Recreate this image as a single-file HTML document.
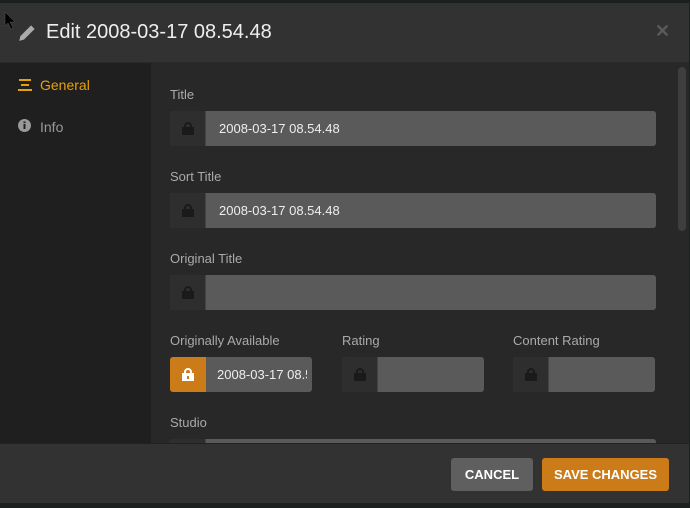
<!DOCTYPE html>
<html><head><style>
*{box-sizing:border-box;margin:0;padding:0}
body{width:690px;height:508px;background:#1c211f;font-family:"Liberation Sans",sans-serif;position:relative;overflow:hidden}
.dlg{position:absolute;left:0;top:3px;width:689px;height:500px;background:#282828}
.hdr{position:absolute;left:0;top:0;width:689px;height:60px;background:#323232;border-bottom:1px solid #2a2a2a}
.hdr h1{position:absolute;left:46px;top:18px;font-size:20px;font-weight:normal;color:#eee}
.side{position:absolute;left:0;top:60px;width:151px;height:380px;background:#1f1f1f}
.nav{position:absolute;left:40px;font-size:14px}
.lbl{position:absolute;left:170px;font-size:13px;color:#aaa}
.inp{position:absolute;height:35px;background:#5a5a5a;border-radius:3px;overflow:hidden}
.lk{position:absolute;left:0;top:0;width:36px;height:35px;background:#2e2e2e;border-right:1px solid #444}
.lk svg{position:absolute;left:12px;top:11px}
.val{position:absolute;left:49px;top:10px;font-size:13px;color:#eee;white-space:nowrap}
.ftr{position:absolute;left:0;top:440px;width:689px;height:60px;background:#323232;border-top:1px solid #222}
.btn{position:absolute;top:14px;height:33px;border-radius:3px;color:#fff;font-weight:bold;font-size:13px;text-align:center;line-height:33px}
</style></head><body>
<div class="dlg">
<div class="hdr">
<svg style="position:absolute;left:18px;top:20px" width="19" height="19" viewBox="0 0 16 16"><path d="M1 15 L2 11 L11 2 L14 5 L5 14 Z" fill="#aaa"/></svg>
<h1>Edit 2008-03-17 08.54.48</h1>
<div style="position:absolute;left:655px;top:18px;color:#5a5a5a;font-size:18px;font-weight:bold">✕</div>
</div>
<div class="side">
<svg style="position:absolute;left:18px;top:16px" width="14" height="12"><rect x="1" y="0" width="12" height="2" fill="#e5a00d"/><rect x="3" y="5" width="8" height="2" fill="#e5a00d"/><rect x="0" y="10" width="14" height="2" fill="#e5a00d"/></svg>
<div class="nav" style="top:14px;color:#e5a00d">General</div>
<svg style="position:absolute;left:18px;top:56px" width="13" height="13"><circle cx="6.5" cy="6.5" r="6.5" fill="#999"/><rect x="5.5" y="5" width="2" height="5" fill="#1f1f1f"/><rect x="5.5" y="2.5" width="2" height="1.6" fill="#1f1f1f"/></svg>
<div class="nav" style="top:56px;color:#999">Info</div>
</div>
<div style="position:absolute;left:678px;top:64px;width:8px;height:164px;background:#3e3e3e;border-radius:4px"></div>

<div class="lbl" style="top:84px">Title</div>
<div class="inp" style="left:170px;top:108px;width:486px"><div class="lk"><svg width="12" height="13"><rect x="0" y="5" width="12" height="8" fill="#1a1a1a"/><path d="M3 6V4a3 3 0 0 1 6 0v2" stroke="#1a1a1a" stroke-width="2" fill="none"/></svg></div><div class="val">2008-03-17 08.54.48</div></div>
<div class="lbl" style="top:166px">Sort Title</div>
<div class="inp" style="left:170px;top:190px;width:486px"><div class="lk"><svg width="12" height="13"><rect x="0" y="5" width="12" height="8" fill="#1a1a1a"/><path d="M3 6V4a3 3 0 0 1 6 0v2" stroke="#1a1a1a" stroke-width="2" fill="none"/></svg></div><div class="val">2008-03-17 08.54.48</div></div>
<div class="lbl" style="top:248px">Original Title</div>
<div class="inp" style="left:170px;top:272px;width:486px"><div class="lk"><svg width="12" height="13"><rect x="0" y="5" width="12" height="8" fill="#1a1a1a"/><path d="M3 6V4a3 3 0 0 1 6 0v2" stroke="#1a1a1a" stroke-width="2" fill="none"/></svg></div></div>
<div class="lbl" style="top:330px">Originally Available</div>
<div class="lbl" style="top:330px;left:342px">Rating</div>
<div class="lbl" style="top:330px;left:513px">Content Rating</div>
<div class="inp" style="left:170px;top:354px;width:142px"><div class="lk" style="background:#cc7b19;border:none"><svg width="12" height="13"><rect x="0" y="5" width="12" height="8" fill="#fff"/><path d="M3 6V4a3 3 0 0 1 6 0v2" stroke="#fff" stroke-width="2" fill="none"/><rect x="5" y="8" width="2" height="3" fill="#cc7b19"/></svg></div><div class="val" style="left:47px;width:90px;overflow:hidden">2008-03-17 08.54.48</div></div>
<div class="inp" style="left:342px;top:354px;width:142px"><div class="lk"><svg width="12" height="13"><rect x="0" y="5" width="12" height="8" fill="#1a1a1a"/><path d="M3 6V4a3 3 0 0 1 6 0v2" stroke="#1a1a1a" stroke-width="2" fill="none"/></svg></div></div>
<div class="inp" style="left:513px;top:354px;width:142px"><div class="lk"><svg width="12" height="13"><rect x="0" y="5" width="12" height="8" fill="#1a1a1a"/><path d="M3 6V4a3 3 0 0 1 6 0v2" stroke="#1a1a1a" stroke-width="2" fill="none"/></svg></div></div>
<div class="lbl" style="top:412px">Studio</div>
<div class="inp" style="left:170px;top:436px;width:486px"><div class="lk"></div></div>

<div class="ftr">
<div class="btn" style="left:451px;width:82px;background:#5f5f5f">CANCEL</div>
<div class="btn" style="left:542px;width:127px;background:#cc7b19">SAVE CHANGES</div>
</div>
</div>
<svg style="position:absolute;left:4px;top:11px" width="12" height="20"><path d="M1 1 L1 15 L4 12 L7 18 L9 17 L6 11 L11 11 Z" fill="#000" stroke="#555" stroke-width="0.5"/></svg>
</body></html>
